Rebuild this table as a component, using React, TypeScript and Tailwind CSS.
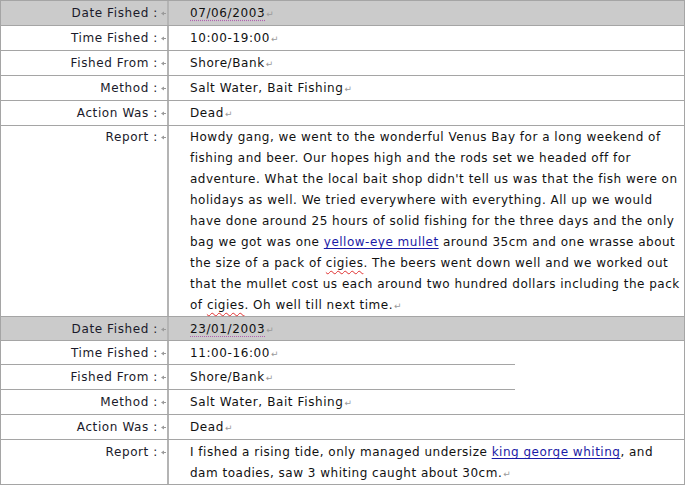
import React from "react";

const font = { fontFamily: '"DejaVu Sans", Verdana, sans-serif' };

function Pm() {
  return (
    <span className="ml-[1px] inline-block align-baseline text-[9px] leading-none text-[#9a9a9a]">↵</span>
  );
}

function CellMark() {
  return (
    <svg width="6" height="7" viewBox="0 0 6 7" className="ml-[3px] inline-block align-middle">
      <polygon points="0,3.5 3,1.5 3,5.5" fill="#9a9a9a" />
      <rect x="3" y="3" width="2" height="1" fill="#9a9a9a" />
    </svg>
  );
}

function Row({
  label,
  children,
  header,
  tall,
  shortBorder,
  pad = "pt-[2px] pb-px",
}: {
  label: string;
  children: React.ReactNode;
  header?: boolean;
  tall?: boolean;
  shortBorder?: boolean;
  pad?: string;
}) {
  return (
    <div>
      <div
        className={`flex ${header ? "bg-[#cbcbcb]" : "bg-white"} ${
          shortBorder ? "" : "border-b border-[#a5a5a5]"
        }`}
      >
        <div
          className={`w-[168px] shrink-0 border-r-2 border-[#b4b4b4] pr-0 text-right ${pad}`}
        >
          <span className="text-[#1a1a2a]">{label} :</span>
          <CellMark />
        </div>
        <div className={`flex-1 pl-[21px] ${pad} ${tall ? "" : "whitespace-nowrap"}`}>{children}</div>
      </div>
      {shortBorder && <div className="h-px w-[514px] bg-[#a5a5a5]" />}
    </div>
  );
}

function Link({ children }: { children: React.ReactNode }) {
  return <span className="text-[#1a1aa6] underline decoration-[#1a1aa6] underline-offset-2">{children}</span>;
}

function Typo({ children }: { children: React.ReactNode }) {
  return (
    <span className="underline decoration-wavy decoration-[#e03030] decoration-1 underline-offset-[3px]">
      {children}
    </span>
  );
}

function DateTxt({ children }: { children: React.ReactNode }) {
  return (
    <span className="underline decoration-dotted decoration-[#b060b0] underline-offset-[3px]">{children}</span>
  );
}

export default function App() {
  return (
    <div
      className="w-[685px] h-[485px] overflow-hidden bg-white text-[12px] leading-[21px] tracking-[0.6px] text-[#111]"
      style={font}
    >
      <div className="border-l border-r border-t border-[#a5a5a5]">
        <Row label="Date Fished" header>
          <DateTxt>07/06/2003</DateTxt>
          <Pm />
        </Row>
        <Row label="Time Fished">
          10:00-19:00
          <Pm />
        </Row>
        <Row label="Fished From">
          Shore/Bank
          <Pm />
        </Row>
        <Row label="Method">
          Salt Water, Bait Fishing
          <Pm />
        </Row>
        <Row label="Action Was">
          Dead
          <Pm />
        </Row>
        <Row label="Report" tall pad="pt-px pb-0">
          <div className="whitespace-nowrap tracking-[0.5px]">
            Howdy gang, we went to the wonderful Venus Bay for a long weekend of
            <br />
            fishing and beer. Our hopes high and the rods set we headed off for
            <br />
            adventure. What the local bait shop didn't tell us was that the fish were on
            <br />
            holidays as well. We tried everywhere with everything. All up we would
            <br />
            have done around 25 hours of solid fishing for the three days and the only
            <br />
            bag we got was one <Link>yellow-eye mullet</Link> around 35cm and one wrasse about
            <br />
            the size of a pack of <Typo>cigies</Typo>. The beers went down well and we worked out
            <br />
            that the mullet cost us each around two hundred dollars including the pack
            <br />
            of <Typo>cigies</Typo>. Oh well till next time.
            <Pm />
          </div>
        </Row>
        <Row label="Date Fished" header pad="pt-[2px] pb-0">
          <DateTxt>23/01/2003</DateTxt>
          <Pm />
        </Row>
        <Row label="Time Fished" shortBorder pad="pt-[2px] pb-0">
          11:00-16:00
          <Pm />
        </Row>
        <Row label="Fished From" shortBorder>
          Shore/Bank
          <Pm />
        </Row>
        <Row label="Method">
          Salt Water, Bait Fishing
          <Pm />
        </Row>
        <Row label="Action Was">
          Dead
          <Pm />
        </Row>
        <Row label="Report" tall pad="pt-[2px] pb-0">
          <div className="whitespace-nowrap tracking-[0.5px]">
            I fished a rising tide, only managed undersize <Link>king george whiting</Link>, and
            <br />
            dam toadies, saw 3 whiting caught about 30cm.
            <Pm />
          </div>
        </Row>
      </div>
    </div>
  );
}
